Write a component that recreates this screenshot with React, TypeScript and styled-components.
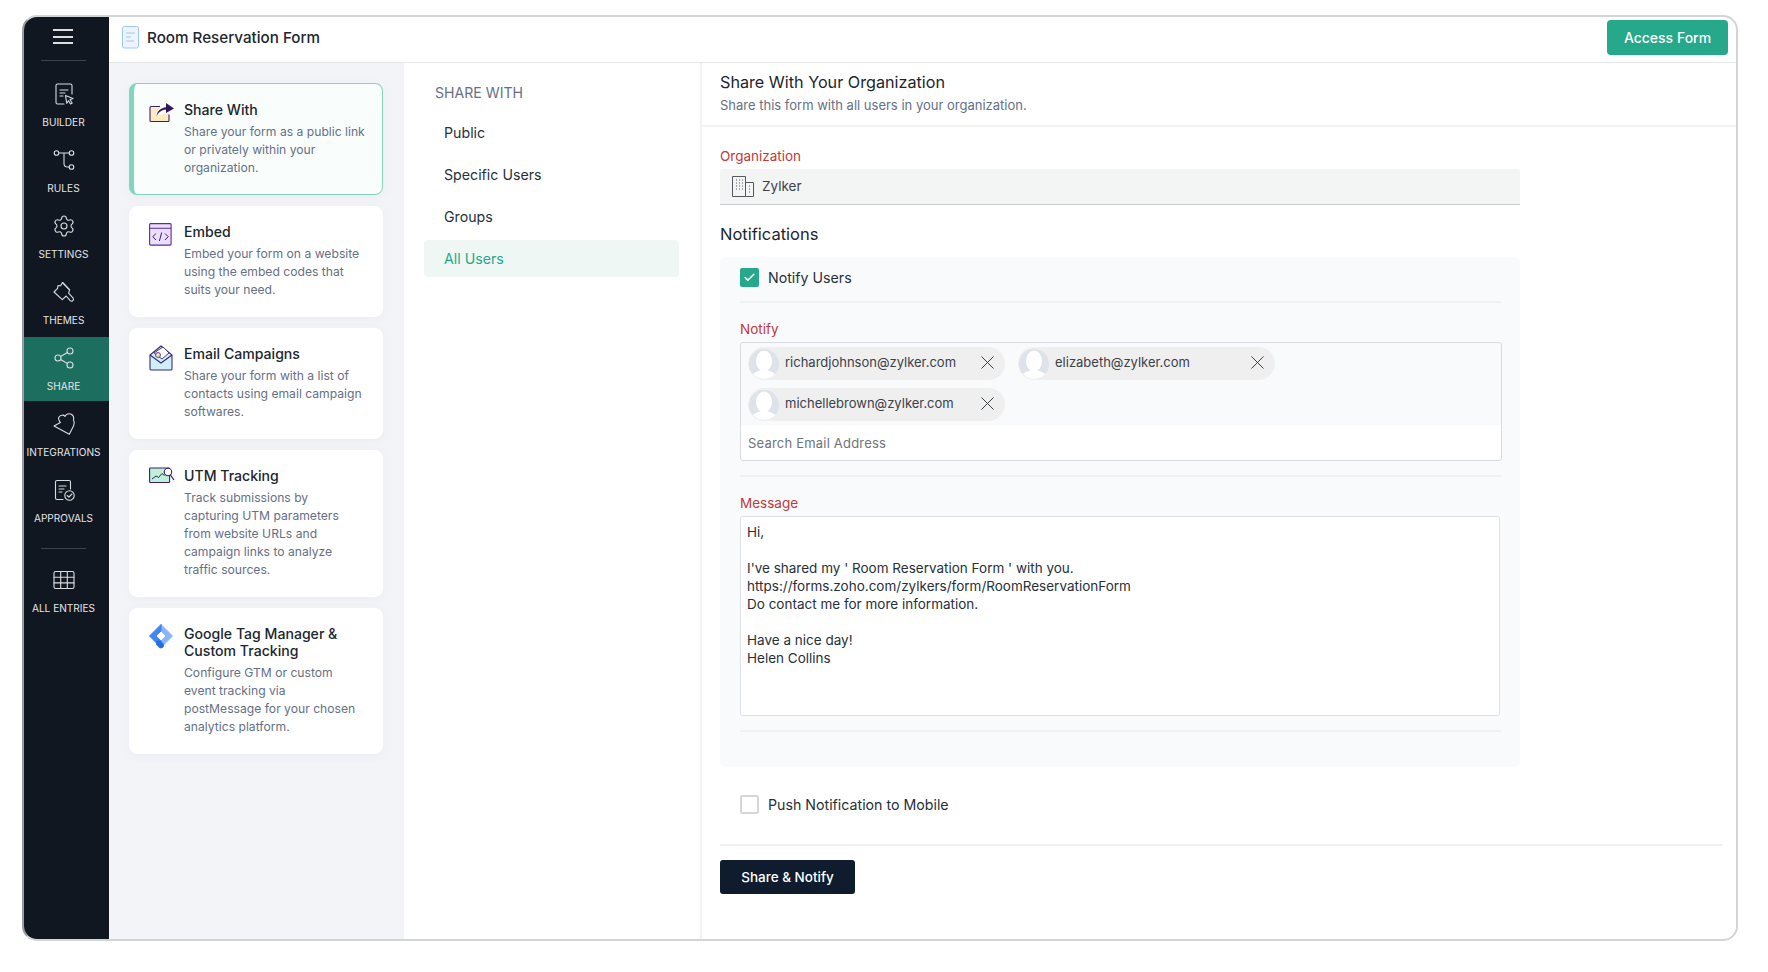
import React from "react";
import styled, { createGlobalStyle } from "styled-components";
import { Settings, Share2, X, Check } from "lucide-react";

const GlobalStyle = createGlobalStyle`
  html, body {
    margin: 0;
    padding: 0;
    background: #fff;
  }
  * {
    box-sizing: border-box;
  }
  body {
    font-family: Inter, "Liberation Sans", sans-serif;
    color: #1f2630;
  }
`;

const Frame = styled.div`
  width: 1716px;
  height: 926px;
  margin: 15px 0 0 22px;
  display: flex;
  border: 2px solid #d3d4d6;
  border-left-color: #9a9da1;
  border-radius: 15px;
  overflow: hidden;
  background: #fff;
`;

const Sidebar = styled.nav`
  width: 85px;
  flex: none;
  display: flex;
  flex-direction: column;
  gap: 2px;
  background: #111720;
  padding-top: 12px;
`;

const Burger = styled.button`
  width: 20px;
  height: 15px;
  margin: 0 0 14px 29px;
  padding: 0;
  border: none;
  background: none;
  display: flex;
  flex-direction: column;
  justify-content: space-between;
  span {
    display: block;
    height: 2px;
    background: #dcdedf;
  }
`;

const SideRule = styled.div<{ $after: number; $before: number }>`
  width: 45px;
  height: 1px;
  margin: ${(p) => p.$before}px 0 ${(p) => p.$after}px 17px;
  background: #3d434b;
`;

const SideItem = styled.a<{ $active?: boolean }>`
  height: 64px;
  padding: 9px 6px 0 0;
  display: flex;
  flex-direction: column;
  align-items: center;
  gap: 10px;
  color: #d9dcdf;
  background: ${(p) => (p.$active ? "#1c6e5e" : "transparent")};
  svg {
    display: block;
    flex: none;
  }
`;

const SideLabel = styled.span`
  font-size: 10.1px;
  line-height: 12px;
  white-space: nowrap;
  color: #e3e5e7;
`;

const Main = styled.div`
  flex: 1;
  min-width: 0;
  display: flex;
  flex-direction: column;
`;

const TopBar = styled.header`
  height: 46px;
  flex: none;
  display: flex;
  align-items: center;
  padding: 0 8px 4px 13px;
  border-bottom: 1px solid #e6e8ea;
`;

const FormName = styled.h1`
  margin: 0 0 0 7px;
  font-size: 15.2px;
  line-height: 20px;
  font-weight: 450;
  color: #20262e;
  flex: 1;
`;

const AccessButton = styled.button`
  width: 121px;
  height: 35px;
  border: none;
  border-radius: 4px;
  background: #26a88a;
  color: #fff;
  font: 450 14px Inter, sans-serif;
`;

const Columns = styled.div`
  flex: 1;
  min-height: 0;
  display: flex;
`;

const CardColumn = styled.aside`
  width: 295px;
  flex: none;
  padding: 20px 0 0 20px;
  display: flex;
  flex-direction: column;
  gap: 11.5px;
  background: #f2f4f8;
`;

const Card = styled.div<{ $active?: boolean }>`
  width: 254px;
  display: flex;
  gap: 9px;
  padding: ${(p) => (p.$active ? "17px" : "16px")} 10px 16.5px ${(p) => (p.$active ? "15px" : "19px")};
  border-radius: 8px;
  border: 1px solid ${(p) => (p.$active ? "#84d5bd" : "#fff")};
  border-left-width: ${(p) => (p.$active ? "5px" : "1px")};
  background: ${(p) => (p.$active ? "#f9fefd" : "#fff")};
  box-shadow: 0 2px 10px rgba(90, 100, 130, 0.05);
`;

const CardIcon = styled.div`
  width: 26px;
  flex: none;
  svg {
    display: block;
  }
`;

const CardTitle = styled.div`
  font-size: 14.1px;
  line-height: 17px;
  font-weight: 450;
  color: #20262e;
  margin-bottom: 5px;
  white-space: pre-line;
`;

const CardText = styled.div`
  font-size: 12.15px;
  line-height: 18px;
  color: #667085;
  white-space: pre-line;
`;

const SubNav = styled.div`
  width: 298px;
  flex: none;
  padding: 21px 0 0 20px;
  border-right: 2px solid #f1f2f4;
`;

const SubNavTitle = styled.div`
  font-size: 14.1px;
  line-height: 18px;
  color: #667085;
  padding-left: 11px;
  margin-bottom: 12px;
`;

const SubNavItem = styled.a<{ $active?: boolean }>`
  display: block;
  width: 255px;
  height: 37px;
  margin-bottom: 5px;
  padding-left: 20px;
  font-size: 14.2px;
  line-height: 37px;
  border-radius: 4px;
  color: ${(p) => (p.$active ? "#26a88a" : "#27303a")};
  background: ${(p) => (p.$active ? "#eff7f4" : "transparent")};
`;

const Content = styled.section`
  flex: 1;
  min-width: 0;
`;

const ContentHead = styled.div`
  height: 64px;
  padding: 9px 18px 0;
  border-bottom: 2px solid #f3f3f4;
`;

const ContentTitle = styled.h2`
  margin: 0 0 4px;
  font-size: 16.2px;
  line-height: 20px;
  font-weight: 400;
  color: #20262e;
`;

const ContentSub = styled.div`
  font-size: 13px;
  line-height: 18px;
  color: #667085;
`;

const Form = styled.div`
  padding: 21px 13px 0 18px;
`;

const FieldLabel = styled.label`
  display: block;
  font-size: 13.5px;
  line-height: 16px;
  color: #c0393b;
  margin-bottom: 5px;
`;

const OrgField = styled.div`
  width: 800px;
  height: 36px;
  display: flex;
  align-items: center;
  gap: 8px;
  padding: 0 0 1px 12px;
  background: #f3f5f5;
  border-bottom: 1px solid #c9cbcc;
  border-radius: 3px 3px 0 0;
  font-size: 13.5px;
  color: #3a4149;
`;

const SectionTitle = styled.h3`
  margin: 19px 0 13px;
  font-size: 16.5px;
  line-height: 20px;
  font-weight: 400;
  color: #20262e;
`;

const NotifyPanel = styled.div`
  width: 800px;
  height: 510px;
  padding: 11px 19px 0 20px;
  border-radius: 6px;
  background: #f9fafc;
`;

const CheckRow = styled.label`
  display: flex;
  align-items: center;
  gap: 9px;
  height: 19px;
  font-size: 14.2px;
  color: #27303a;
`;

const CheckBox = styled.span<{ $checked?: boolean }>`
  width: 19px;
  height: 19px;
  flex: none;
  display: flex;
  align-items: center;
  justify-content: center;
  border-radius: 2px;
  background: ${(p) => (p.$checked ? "#26a88a" : "#fff")};
  border: ${(p) => (p.$checked ? "none" : "2px solid #d4d6d8")};
`;

const PanelRule = styled.div<{ $top: number; $bottom: number }>`
  height: 2px;
  margin: ${(p) => p.$top}px 0 ${(p) => p.$bottom}px;
  background: #f0f1f3;
`;

const NotifyBox = styled.div`
  width: 762px;
  height: 119px;
  border: 1px solid #d8dbe0;
  border-radius: 3px;
`;

const ChipArea = styled.div`
  height: 82px;
  padding: 4px 7px;
  display: flex;
  flex-wrap: wrap;
  align-content: flex-start;
  gap: 8px 13px;
`;

const Chip = styled.div`
  width: 257px;
  height: 33px;
  display: flex;
  align-items: center;
  padding: 0 6px 0 1px;
  border-radius: 17px;
  background: #efefef;
  font-size: 13px;
  color: #3a4149;
  svg {
    flex: none;
  }
`;

const ChipEmail = styled.span`
  flex: 1;
  margin: 0 0 3px 6px;
`;

const ChipClose = styled(X)`
  margin-bottom: 3px;
`;

const SearchInput = styled.input`
  display: block;
  width: 100%;
  height: 35px;
  padding: 0 0 0 7px;
  border: none;
  outline: none;
  border-radius: 0 0 3px 3px;
  background: #fff;
  font: 13px Inter, sans-serif;
  letter-spacing: 0.2px;
  &::placeholder {
    color: #6f747a;
  }
`;

const MessageBox = styled.textarea`
  display: block;
  width: 760px;
  height: 200px;
  padding: 6px 6px;
  resize: none;
  outline: none;
  overflow: hidden;
  border: 1px solid #dfe1e5;
  border-radius: 3px;
  background: #fff;
  font: 13.5px/18px Inter, sans-serif;
  color: #27303a;
`;

const PushRow = styled(CheckRow)`
  margin: 28px 0 0 20px;
`;

const FootRule = styled.div`
  height: 2px;
  margin: 30px 0 14px;
  background: #f0f1f2;
`;

const NotifyButton = styled.button`
  display: block;
  width: 135px;
  height: 34px;
  border: none;
  border-radius: 3px;
  background: #0e1c2e;
  color: #fff;
  font: 450 13.5px Inter, sans-serif;
`;

const stroke = { fill: "none", stroke: "currentColor", strokeWidth: 1.1, strokeLinecap: "round", strokeLinejoin: "round" } as const;

const BuilderIcon = () => (
  <svg width="24" height="24" viewBox="0 0 24 24" {...stroke}>
    <path d="M12 22H5.500A1.500 1.500 0 0 1 4 20.500v-17A1.500 1.500 0 0 1 5.500 2h13A1.500 1.500 0 0 1 20 3.500V12" />
    <path d="M8 8h8M8 11h5M8 14h3" />
    <path d="M13.500 13.500l7.500 3-3 1.300 2.200 3.200-1.700 1-2-3.200-1.700 2.500z" />
  </svg>
);

const RulesIcon = () => (
  <svg width="24" height="24" viewBox="0 0 24 24" {...stroke}>
    <circle cx="4.500" cy="5" r="2.300" />
    <circle cx="19.500" cy="5" r="2.300" />
    <circle cx="19.500" cy="19" r="2.300" />
    <path d="M6.800 5h10.400M12 5v10.500a3.500 3.500 0 0 0 3.500 3.500h1.700" />
  </svg>
);

const ThemesIcon = () => (
  <svg width="24" height="24" viewBox="0 0 24 24" {...stroke}>
    <path d="M10.500 2.500L8.600 5.800 6 5.600l-.4 2.800L2 12l8.300 7.600 3.900-3.600 4 4.600c1.500 1.600 4.200-.5 3-2.400l-4.600-5 1-3.400z" />
    <path d="M10.500 2.500l7.100 7.300" />
  </svg>
);

const PuzzleIcon = () => (
  <svg width="24" height="24" viewBox="0 0 24 24" {...stroke}>
    <path d="M2 14l6.400-3.400C6.800 8.500 6 6 7.300 4.600 8.600 3 11.500 2.500 13 4.400c1-2.100 4-3.400 6.300-2.200 2.300 1.300 2.700 3.300 2.200 5.600.9 1.700.7 4.200 0 6.200l-4.200 8.300z" />
  </svg>
);

const ApprovalsIcon = () => (
  <svg width="24" height="24" viewBox="0 0 24 24" {...stroke}>
    <path d="M11 21.500H5A1.500 1.500 0 0 1 3.500 20V4A1.500 1.500 0 0 1 5 2.500h12A1.500 1.500 0 0 1 18.500 4v7" />
    <path d="M7 8h7M7 11h5M7 14h3" />
    <circle cx="17.500" cy="17.500" r="4.700" />
    <path d="M15.200 17.500l1.700 1.700 3-3.200" />
  </svg>
);

const EntriesIcon = () => (
  <svg width="24" height="24" viewBox="0 0 24 24" {...stroke}>
    <rect x="2" y="3.500" width="20" height="17" rx="1.500" />
    <path d="M2 9.200h20M2 14.900h20M8.700 3.500v17M15.300 3.500v17" />
  </svg>
);

const FormDocIcon = () => (
  <svg width="18" height="23" viewBox="0 0 18 23" fill="#eef5ff" stroke="#9cc6f7" strokeWidth="1">
    <rect x="0.500" y="0.500" width="16" height="21.500" rx="2" />
    <path d="M4 7h9M4 11h5M4 15h8" fill="none" />
  </svg>
);

const ShareCardIcon = () => (
  <svg width="26" height="22" viewBox="0 0 26 22">
    <path d="M1 6.500h10.500L6 15l14-3v7.500a1 1 0 0 1-1 1H2a1 1 0 0 1-1-1z" fill="#fde9c2" />
    <path d="M11 5.500H2a1 1 0 0 0-1 1v13a1 1 0 0 0 1 1h17a1 1 0 0 0 1-1v-6" fill="none" stroke="#3b1f6e" strokeWidth="1.100" />
    <path d="M7.500 15.500C8 10 12 6.800 17 6.300V2l8 5.500-8 4.500V8.500c-4 .3-7.800 2.500-9.500 7z" fill="#2e1760" />
  </svg>
);

const EmbedCardIcon = () => (
  <svg width="23" height="23" viewBox="0 0 23 23">
    <rect x="0.600" y="0.600" width="21.500" height="21.500" rx="1" fill="#ecdffb" stroke="#5b2d9e" strokeWidth="1.100" />
    <path d="M0.600 5.200h21.500" stroke="#5b2d9e" strokeWidth="1.100" />
    <path d="M7 10.500L3.800 13.700 7 17M16 10.500l3.200 3.200L16 17M12.700 9.500l-2.300 8.500" fill="none" stroke="#3b1f6e" strokeWidth="1" />
  </svg>
);

const EmailCardIcon = () => (
  <svg width="25" height="26" viewBox="0 0 25 26">
    <path d="M1 10L12 1l11 9v14a1 1 0 0 1-1 1H2a1 1 0 0 1-1-1z" fill="#cfeffa" stroke="#3b2a78" strokeWidth="1.100" />
    <path d="M5 8l9-6 6 6-7 6z" fill="#fff" stroke="#3b2a78" strokeWidth="0.900" />
    <path d="M1 10l11 8 11-8" fill="none" stroke="#3b2a78" strokeWidth="1.100" />
    <circle cx="9" cy="10" r="2.500" fill="#f4d6c8" stroke="#3b2a78" strokeWidth="0.800" />
  </svg>
);

const UtmCardIcon = () => (
  <svg width="26" height="18" viewBox="0 0 26 18">
    <rect x="0.600" y="1" width="20" height="14.500" rx="0.800" fill="#bff0d8" stroke="#3b1f6e" strokeWidth="1.100" />
    <path d="M3 12l4-3 2.500 1.500 3.500-4 2.500 2" fill="none" stroke="#3b1f6e" strokeWidth="1" />
    <circle cx="19" cy="5" r="3.700" fill="#fff" stroke="#3b1f6e" strokeWidth="1.100" />
    <path d="M21.500 8l3.500 5" stroke="#3b1f6e" strokeWidth="1.300" />
  </svg>
);

const TagManagerSvg = styled.svg`
  margin: -2px 0 0 -1px;
`;

const TagManagerIcon = () => (
  <TagManagerSvg width="26" height="26" viewBox="0 0 26 26" strokeLinejoin="round">
    <path d="M13 1.500L24.500 13 13 24.500V18l5-5-5-5z" fill="#8ab4f8" stroke="#8ab4f8" />
    <path d="M13 1.500L1.500 13l7.500 7.500 4-2.500-5-5 5-5z" fill="#4285f4" stroke="#4285f4" />
    <path d="M8.500 17.500L13 18l3 3.500a3.200 3.200 0 0 1-4.500 3.500L8 21.500z" fill="#246fdb" />
  </TagManagerSvg>
);

const BuildingIcon = () => (
  <svg width="22" height="22" viewBox="0 0 22 22" fill="none" stroke="#55595e" strokeWidth="1">
    <path d="M0.500 21.500V1.500h13v20zM13.500 7.500h8v14h-8z" />
    <path d="M4 5h1M7 5h1M10 5h1M4 8h1M7 8h1M10 8h1M4 11h1M7 11h1M10 11h1M4 14h1M7 14h1M10 14h1M17 11h1M17 14h1M17 17h1" />
  </svg>
);

const Avatar = ({ id }: { id: string }) => (
  <svg width="30" height="30" viewBox="0 0 30 30">
    <defs>
      <clipPath id={id}>
        <circle cx="15" cy="15" r="15" />
      </clipPath>
    </defs>
    <g clipPath={`url(#${id})`}>
      <rect width="30" height="30" fill="#dde2eb" />
      <ellipse cx="15" cy="12" rx="8" ry="10.500" fill="#fff" />
      <path d="M1 30c1-6 7-7.500 10-8.500h8c3 1 9 2.500 10 8.500z" fill="#fff" />
    </g>
  </svg>
);

const sideTop = [
  { label: "BUILDER", icon: <BuilderIcon /> },
  { label: "RULES", icon: <RulesIcon /> },
  { label: "SETTINGS", icon: <Settings size={24} strokeWidth={1.1} /> },
  { label: "THEMES", icon: <ThemesIcon /> },
  { label: "SHARE", icon: <Share2 size={24} strokeWidth={1.1} />, active: true },
  { label: "INTEGRATIONS", icon: <PuzzleIcon /> },
  { label: "APPROVALS", icon: <ApprovalsIcon /> },
];

const cards = [
  {
    title: "Share With",
    text: "Share your form as a public link\nor privately within your\norganization.",
    icon: <ShareCardIcon />,
    active: true,
  },
  {
    title: "Embed",
    text: "Embed your form on a website\nusing the embed codes that\nsuits your need.",
    icon: <EmbedCardIcon />,
  },
  {
    title: "Email Campaigns",
    text: "Share your form with a list of\ncontacts using email campaign\nsoftwares.",
    icon: <EmailCardIcon />,
  },
  {
    title: "UTM Tracking",
    text: "Track submissions by\ncapturing UTM parameters\nfrom website URLs and\ncampaign links to analyze\ntraffic sources.",
    icon: <UtmCardIcon />,
  },
  {
    title: "Google Tag Manager &\nCustom Tracking",
    text: "Configure GTM or custom\nevent tracking via\npostMessage for your chosen\nanalytics platform.",
    icon: <TagManagerIcon />,
  },
];

const message = `Hi,

I've shared my ' Room Reservation Form ' with you.
https://forms.zoho.com/zylkers/form/RoomReservationForm
Do contact me for more information.

Have a nice day!
Helen Collins`;

const emails = ["richardjohnson@zylker.com", "elizabeth@zylker.com", "michellebrown@zylker.com"];

export default function App(): React.ReactElement {
  return (
    <>
      <GlobalStyle />
      <Frame>
        <Sidebar>
          <Burger aria-label="Menu">
            <span />
            <span />
            <span />
          </Burger>
          <SideRule $before={0} $after={10} />
          {sideTop.map((item) => (
            <SideItem key={item.label} $active={item.active}>
              {item.icon}
              <SideLabel>{item.label}</SideLabel>
            </SideItem>
          ))}
          <SideRule $before={13} $after={8} />
          <SideItem>
            <EntriesIcon />
            <SideLabel>ALL ENTRIES</SideLabel>
          </SideItem>
        </Sidebar>
        <Main>
          <TopBar>
            <FormDocIcon />
            <FormName>Room Reservation Form</FormName>
            <AccessButton>Access Form</AccessButton>
          </TopBar>
          <Columns>
            <CardColumn>
              {cards.map((card) => (
                <Card key={card.title} $active={card.active}>
                  <CardIcon>{card.icon}</CardIcon>
                  <div>
                    <CardTitle>{card.title}</CardTitle>
                    <CardText>{card.text}</CardText>
                  </div>
                </Card>
              ))}
            </CardColumn>
            <SubNav>
              <SubNavTitle>SHARE WITH</SubNavTitle>
              <SubNavItem>Public</SubNavItem>
              <SubNavItem>Specific Users</SubNavItem>
              <SubNavItem>Groups</SubNavItem>
              <SubNavItem $active>All Users</SubNavItem>
            </SubNav>
            <Content>
              <ContentHead>
                <ContentTitle>Share With Your Organization</ContentTitle>
                <ContentSub>Share this form with all users in your organization.</ContentSub>
              </ContentHead>
              <Form>
                <FieldLabel>Organization</FieldLabel>
                <OrgField>
                  <BuildingIcon />
                  Zylker
                </OrgField>
                <SectionTitle>Notifications</SectionTitle>
                <NotifyPanel>
                  <CheckRow>
                    <CheckBox $checked>
                      <Check size={13} color="#fff" strokeWidth={3} />
                    </CheckBox>
                    Notify Users
                  </CheckRow>
                  <PanelRule $top={14} $bottom={18} />
                  <FieldLabel>Notify</FieldLabel>
                  <NotifyBox>
                    <ChipArea>
                      {emails.map((email, index) => (
                        <Chip key={email}>
                          <Avatar id={`avatar-clip-${index}`} />
                          <ChipEmail>{email}</ChipEmail>
                          <ChipClose size={23} strokeWidth={1} color="#33383e" />
                        </Chip>
                      ))}
                    </ChipArea>
                    <SearchInput placeholder="Search Email Address" />
                  </NotifyBox>
                  <PanelRule $top={14} $bottom={18} />
                  <FieldLabel>Message</FieldLabel>
                  <MessageBox readOnly defaultValue={message} />
                  <PanelRule $top={14} $bottom={0} />
                </NotifyPanel>
                <PushRow>
                  <CheckBox />
                  Push Notification to Mobile
                </PushRow>
                <FootRule />
                <NotifyButton>Share &amp; Notify</NotifyButton>
              </Form>
            </Content>
          </Columns>
        </Main>
      </Frame>
    </>
  );
}
